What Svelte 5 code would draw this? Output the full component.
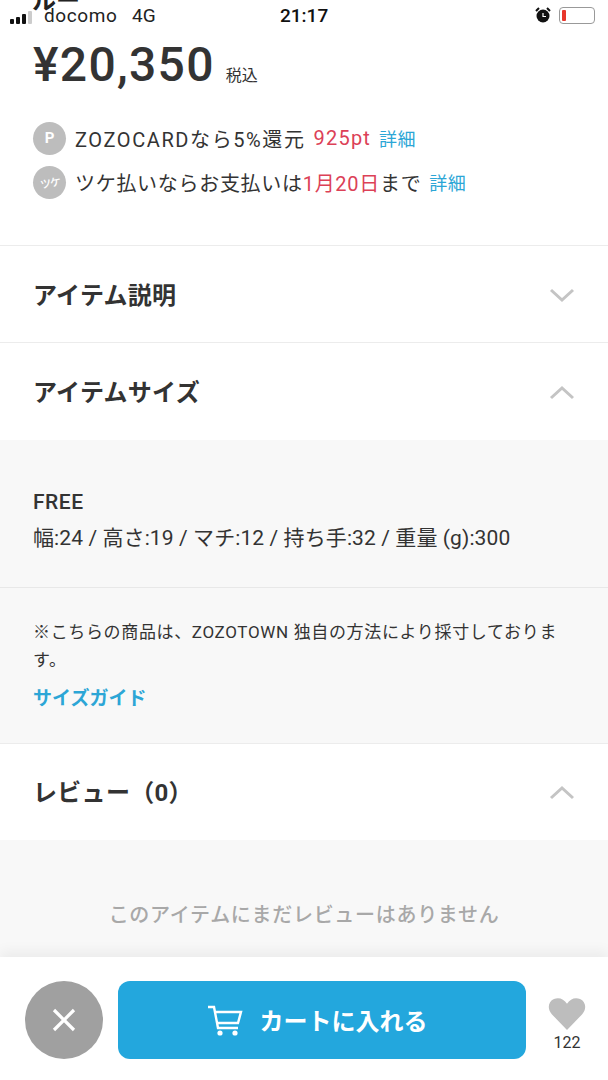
<script>
  const sizes = '幅:24 / 高さ:19 / マチ:12 / 持ち手:32 / 重量 (g):300';
</script>

<div class="page">
  <div class="status">
    <div class="clipped">ルー</div>
    <div class="signal"><i class="b1"></i><i class="b2"></i><i class="b3"></i><i class="b4"></i></div>
    <span class="carrier">docomo</span>
    <span class="net">4G</span>
    <span class="time">21:17</span>
    <svg class="alarm" width="18" height="18" viewBox="0 0 18 18">
      <circle cx="9" cy="10" r="6.500" fill="#111" />
      <path d="M9 7v3.500h3" stroke="#fff" stroke-width="1.200" fill="none" />
      <path d="M2 5l3-3M16 5l-3-3" stroke="#111" stroke-width="2" />
    </svg>
    <div class="battery"><i></i></div>
  </div>

  <section class="price-block">
    <div class="price">¥20,350<small>税込</small></div>
    <div class="notes">
      <div class="note">
        <span class="badge">P</span>
        <span class="zozo">ZOZOCARDなら5%還元</span>
        <em class="pt">925pt</em>
        <a href="#a">詳細</a>
      </div>
      <div class="note">
        <span class="badge tsuke"><b>ツケ</b></span>
        <span class="tsuke-text">ツケ払いならお支払いは<em>1月20日</em>まで</span>
        <a href="#a">詳細</a>
      </div>
    </div>
  </section>

  <div class="acc">
    <h2>アイテム説明</h2>
    <svg class="chev" width="26" height="16" viewBox="0 0 26 16"><path d="M2 3l11 10L24 3" /></svg>
  </div>
  <div class="acc open">
    <h2>アイテムサイズ</h2>
    <svg class="chev" width="26" height="16" viewBox="0 0 26 16"><path d="M2 13L13 3l11 10" /></svg>
  </div>

  <div class="panel">
    <div class="size-row">
      <div class="free">FREE</div>
      <div class="dims">{sizes}</div>
    </div>
    <div class="size-note">
      <p>※こちらの商品は、ZOZOTOWN 独自の方法により採寸しております。</p>
      <a href="#a">サイズガイド</a>
    </div>
  </div>

  <div class="acc open review">
    <h2>レビュー（0）</h2>
    <svg class="chev" width="26" height="16" viewBox="0 0 26 16"><path d="M2 13L13 3l11 10" /></svg>
  </div>

  <div class="empty">このアイテムにまだレビューはありません</div>

  <div class="bottom">
    <button class="close" aria-label="閉じる">
      <svg width="26" height="26" viewBox="0 0 26 26"><path d="M3 3l20 20M23 3L3 23" /></svg>
    </button>
    <button class="cart">
      <svg width="36" height="33" viewBox="0 0 36 33" fill="none">
        <path d="M1 3h6l4 21h20M8 8h26l-3 11H10" stroke="#fff" stroke-width="2.400" />
        <circle cx="13" cy="29" r="2.600" fill="#fff" />
        <circle cx="28" cy="29" r="2.600" fill="#fff" />
      </svg>
      <span>カートに入れる</span>
    </button>
    <div class="fav">
      <svg width="38" height="33" viewBox="0 0 38 34" preserveAspectRatio="none">
        <path d="M19 34L4 18C-1 12.500 0 4.500 6 2c5-2 10 0 13 5 3-5 8-7 13-5 6 2.500 7 10.500 2 16z" fill="#bdbdbd" />
      </svg>
      <span>122</span>
    </div>
  </div>
</div>

<style>
  :global(body) {
    margin: 0;
    background: #fff;
  }

  .page {
    position: relative;
    width: 608px;
    height: 1080px;
    overflow: hidden;
    color: #333;
    font-family: Roboto, "Noto Sans CJK JP", sans-serif;
  }

  .status {
    position: absolute;
    top: 0;
    left: 0;
    right: 0;
    height: 34px;
    color: #222;
    font-size: 19px;
  }

  .clipped {
    position: absolute;
    left: 32px;
    top: -14px;
    font-size: 24px;
    line-height: 30px;
    font-weight: 700;
    color: #222;
  }

  .signal {
    position: absolute;
    left: 10px;
    top: 11px;
    display: flex;
    align-items: flex-end;
    gap: 2px;
    height: 13px;
  }

  .signal i {
    width: 4px;
    background: #111;
    border-radius: 1px;
  }

  .b1 { height: 5px; }
  .b2 { height: 7px; }
  .b3 { height: 10px; }
  .signal .b4 { height: 13px; background: #ccc; }

  .carrier, .net, .time {
    position: absolute;
    top: 5px;
    line-height: 22px;
  }

  .carrier { left: 44px; letter-spacing: 0.6px; }
  .net { left: 132px; }
  .time { left: 280px; font-weight: 500; color: #111; }

  .alarm {
    position: absolute;
    left: 534px;
    top: 6px;
  }

  .battery {
    position: absolute;
    left: 559px;
    top: 7px;
    width: 36px;
    height: 17px;
    box-sizing: border-box;
    border: 1px solid #999;
    border-radius: 4px;
    padding: 2px;
  }

  .battery i {
    display: block;
    width: 4px;
    height: 11px;
    background: #e8372c;
    border-radius: 1px;
  }

  .price-block {
    height: 246px;
    box-sizing: border-box;
    padding: 36px 32px 0 33px;
    border-bottom: 1px solid #ececec;
  }

  .price {
    font-size: 48px;
    font-weight: 500;
    line-height: 58px;
    letter-spacing: 1.3px;
    white-space: nowrap;
  }

  .price small {
    font-size: 16px;
    font-weight: 400;
    letter-spacing: 0;
    margin-left: 11px;
  }

  .notes {
    margin-top: 17px;
    display: flex;
    flex-direction: column;
    gap: 12px;
  }

  .note {
    display: flex;
    align-items: center;
    gap: 8px;
    height: 32px;
    font-size: 20px;
    white-space: nowrap;
  }

  .note .badge {
    margin-right: 1px;
  }

  .zozo {
    letter-spacing: 1.600px;
  }

  .tsuke-text {
    letter-spacing: 0.700px;
  }

  .note em {
    font-style: normal;
    color: #dc4157;
  }

  .pt {
    letter-spacing: 1.200px;
  }

  .note a {
    color: #2ca6d6;
    font-size: 18px;
    letter-spacing: 0.5px;
    text-decoration: none;
  }

  .badge {
    display: flex;
    align-items: center;
    justify-content: center;
    width: 33px;
    height: 33px;
    border-radius: 50%;
    background: #bdbdbd;
    color: #fff;
    font-size: 15px;
    font-weight: 700;
  }

  .tsuke b {
    font-size: 11px;
    font-weight: 500;
    letter-spacing: -1px;
    transform: rotate(-10deg);
  }

  .acc {
    display: flex;
    align-items: center;
    justify-content: space-between;
    height: 97px;
    box-sizing: border-box;
    padding: 0 33px;
    border-bottom: 1px solid #ececec;
  }

  .acc.open {
    border-bottom: none;
  }

  .acc h2 {
    margin: 0 0 2px;
    font-size: 24px;
    letter-spacing: 0.3px;
    font-weight: 700;
    color: #333;
  }

  .chev {
    margin-top: 2px;
  }

  .chev path {
    fill: none;
    stroke: #c4c4c4;
    stroke-width: 3;
  }

  .panel {
    background: #f8f8f8;
    height: 304px;
    box-sizing: border-box;
    border-bottom: 1px solid #ececec;
  }

  .size-row {
    height: 148px;
    box-sizing: border-box;
    padding: 49px 33px 0;
    border-bottom: 1px solid #e8e8e8;
  }

  .free {
    font-size: 21px;
    letter-spacing: 0.5px;
    font-weight: 500;
    line-height: 26px;
  }

  .dims {
    margin-top: 9px;
    font-size: 21px;
    letter-spacing: 0.1px;
    line-height: 28px;
    white-space: nowrap;
  }

  .size-note {
    padding: 30px 33px 0;
  }

  .size-note p {
    margin: 0;
    font-size: 17px;
    letter-spacing: 0.650px;
    line-height: 28px;
    width: 536px;
  }

  .size-note a {
    display: block;
    margin-top: 12px;
    color: #2ca6d6;
    font-size: 19px;
    font-weight: 700;
    line-height: 26px;
    text-decoration: none;
  }

  .review {
    height: 96px;
  }

  .review h2 {
    margin-bottom: 4px;
  }

  .empty {
    background: #f8f8f8;
    height: 240px;
    box-sizing: border-box;
    padding-top: 60px;
    text-align: center;
    font-size: 20px;
    letter-spacing: 0.7px;
    font-weight: 500;
    line-height: 30px;
    color: #a8a8a8;
  }

  .bottom {
    position: absolute;
    left: 0;
    right: 0;
    top: 957px;
    height: 123px;
    box-sizing: border-box;
    padding: 24px 0 0 25px;
    background: #fff;
    display: flex;
    align-items: flex-start;
    box-shadow: 0 -6px 12px rgba(0, 0, 0, 0.05);
  }

  button {
    border: none;
    padding: 0;
    font-family: inherit;
    flex-shrink: 0;
  }

  .close {
    width: 78px;
    height: 78px;
    border-radius: 50%;
    background: #a0a0a0;
    display: flex;
    align-items: center;
    justify-content: center;
  }

  .close path {
    stroke: #fff;
    stroke-width: 3.200;
    fill: none;
  }

  .cart {
    margin-left: 15px;
    width: 408px;
    height: 78px;
    box-sizing: border-box;
    padding-right: 10px;
    border-radius: 12px;
    background: #23a7dd;
    color: #fff;
    display: flex;
    align-items: center;
    justify-content: center;
    gap: 17px;
    font-size: 24px;
    font-weight: 700;
  }

  .cart span {
    margin-bottom: 2px;
  }

  .fav {
    margin-left: 22px;
    margin-top: 16px;
    width: 38px;
    display: flex;
    flex-direction: column;
    align-items: center;
    gap: 3px;
    font-size: 16px;
    color: #333;
  }
</style>
